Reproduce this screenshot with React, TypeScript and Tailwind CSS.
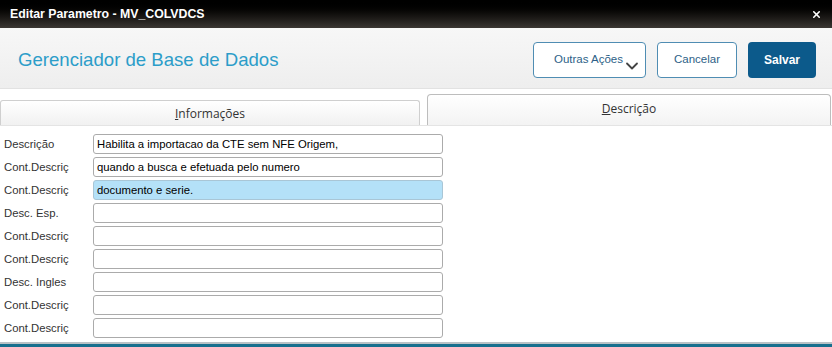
import { ChevronDown, X } from "lucide-react";

const rows: { label: string; value: string; active?: boolean }[] = [
  { label: "Descrição", value: "Habilita a importacao da CTE sem NFE Origem," },
  { label: "Cont.Descriç", value: "quando a busca e efetuada pelo numero" },
  { label: "Cont.Descriç", value: "documento e serie.", active: true },
  { label: "Desc. Esp.", value: "" },
  { label: "Cont.Descriç", value: "" },
  { label: "Cont.Descriç", value: "" },
  { label: "Desc. Ingles", value: "" },
  { label: "Cont.Descriç", value: "" },
  { label: "Cont.Descriç", value: "" },
];

export default function App() {
  return (
    <div className="flex h-[347px] w-[832px] flex-col overflow-hidden bg-white font-['Liberation_Sans',Arial,sans-serif]">
      {/* Title bar */}
      <div className="flex h-[28px] flex-none items-center justify-between bg-gradient-to-b from-[#000000] to-[#3b3733] pl-[10px] pr-[10px]">
        <span className="text-[12.3px] font-bold text-white">Editar Parametro - MV_COLVDCS</span>
        <X className="h-[11px] w-[11px] text-white" strokeWidth={3.5} />
      </div>

      {/* Header */}
      <div className="flex h-[61px] flex-none items-center justify-between border-b border-[#e2e2e2] bg-gradient-to-b from-[#f7f7f7] to-[#eeeeee] pl-[18px] pr-[16px] pt-[3px]">
        <span className="text-[18.6px] text-[#2c9dc9]">Gerenciador de Base de Dados</span>
        <div className="flex items-center gap-[11px]">
          <button className="relative flex h-[36px] w-[113px] items-center justify-end rounded-[4px] border border-[#4f8db3] bg-white pr-[22px] text-[11.5px] text-[#2d5f87]">
            Outras Ações
            <ChevronDown className="absolute right-[3px] top-[13px] h-[20px] w-[20px] text-[#444]" strokeWidth={2.2} />
          </button>
          <button className="h-[36px] w-[80px] rounded-[4px] border border-[#4f8db3] bg-white text-[11.5px] text-[#2d5f87]">
            Cancelar
          </button>
          <button className="h-[36px] w-[68px] rounded-[4px] bg-[#0c5a8b] text-[12px] font-bold text-white">
            Salvar
          </button>
        </div>
      </div>

      {/* Tabs */}
      <div className="flex h-[37px] flex-none items-end gap-[7px] border-b border-[#e4e4e4] pr-[1px] font-['Open_Sans',sans-serif] text-[12px] text-[#333]">
        <div className="flex h-[25px] w-[420px] items-center justify-center rounded-t-[3px] border border-b-0 border-[#cfcfcf] bg-gradient-to-b from-white to-[#f1f1f1] pt-[1px]">
          <span>
            <span className="underline">I</span>nformações
          </span>
        </div>
        <div className="flex h-[31px] flex-1 items-start justify-center rounded-t-[4px] border border-b-0 border-[#bdbdbd] bg-gradient-to-b from-white to-[#f3f3f3] pt-[5px]">
          <span>
            <span className="underline">D</span>escrição
          </span>
        </div>
      </div>

      {/* Form */}
      <div className="flex flex-1 flex-col gap-[3px] pl-[4px] pt-[8px]">
        {rows.map((r, i) => (
          <div key={i} className="flex h-[20px] items-center">
            <span className="w-[89px] text-[11.3px] text-[#333]">{r.label}</span>
            <div
              className={
                r.active
                  ? "flex h-[20px] w-[350px] items-center rounded-[3px] border border-[#a9c6d6] bg-[#b4e1f8] pl-[3px] text-[11.3px] text-black"
                  : "flex h-[20px] w-[350px] items-center rounded-[3px] border border-[#ababab] bg-white pl-[3px] text-[11.3px] text-black"
              }
            >
              {r.value}
            </div>
          </div>
        ))}
      </div>

      {/* Footer strip */}
      <div className="h-[2px] flex-none bg-[#b9c2c6]" />
      <div className="h-[3px] flex-none bg-[#176f8e]" />
    </div>
  );
}
